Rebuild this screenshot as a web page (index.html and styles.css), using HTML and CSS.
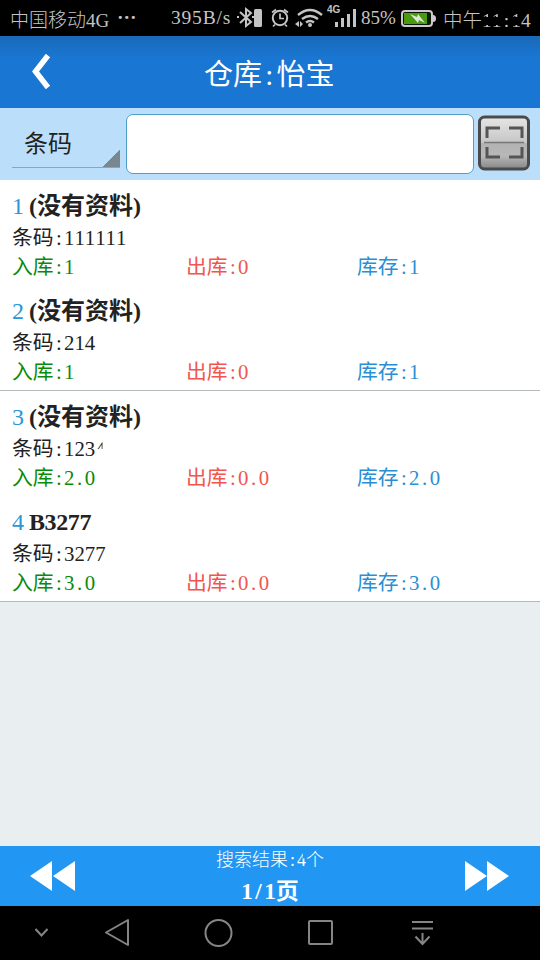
FILE: index.html
```
<!DOCTYPE html>
<html lang="zh-CN">
  <head>
    <meta charset="UTF-8" />
    <meta name="viewport" content="width=device-width, initial-scale=1.0" />
    <link rel="stylesheet" href="styles.css">
    <title>仓库:怡宝</title>
  </head>
  <body>
    <div class="status">
      <span class="carrier">中国移动4G</span>
      <span class="dots">···</span>
      <span class="speed">395B/s</span>
      <svg class="status-icons" width="120" height="36" viewBox="237 0 120 36">
        <g fill="none" stroke="#c4c4c4" stroke-width="2">
          <path d="M240 12l11 10-5 4V9l5 4-11 10M237 17h2M252 17h2" />
          <circle cx="280" cy="18" r="7.200" />
          <path d="M280 13.500v5h4M272 12.500l4-3M288 12.500l-4-3M275 24.500l-2 2M285 24.500l2 2" stroke-width="1.700" />
          <path d="M298 15q12-10 24 0M302 19q8-6 16 0M306 22.500q4-3 8 0" stroke-width="2.400" />
        </g>
        <g fill="#c4c4c4">
          <rect x="254" y="9" width="8" height="18" rx="1.500" />
          <circle cx="310" cy="25" r="2" />
          <path d="M295 24l4-3v6zM300 21l3 3-3 3zM335 22h3v5h-3zM341 18h3v9h-3zM347 14h3v13h-3zM353 9h3v18h-3z" />
          <text x="327" y="13" class="net">4G</text>
        </g>
      </svg>
      <span class="percent">85%</span>
      <svg class="battery" width="36" height="20" viewBox="0 0 36 20">
        <rect x="1" y="3" width="30" height="15" rx="3" fill="#0a1a00" stroke="#d0c8d0" stroke-width="2" />
        <path d="M32 7q3 0 3 3.500t-3 3.500z" fill="#d0c8d0" />
        <rect x="3" y="5" width="23" height="11" fill="#4a9a10" />
        <path d="M9 6l7 3 1-3 7 9-6-3-1 3z" fill="#dde8d4" />
      </svg>
      <span class="clock">中午<span class="worn">11</span><span class="half">:</span><span class="worn">1</span>4</span>
    </div>

    <div class="header">
      <svg class="back" width="20" height="36" viewBox="0 0 20 36">
        <path d="M17 1.500L4.500 17.500l12.500 16" fill="none" stroke="#fff" stroke-width="5.500" />
      </svg>
      <h1>仓库<span class="half">:</span>怡宝</h1>
    </div>

    <div class="search">
      <div class="spinner">条码</div>
      <input class="keyword" type="text" />
      <button class="scan">
        <svg width="52" height="56" viewBox="0 0 52 56">
          <defs>
            <linearGradient id="metal" x1="0" y1="0" x2="0" y2="1">
              <stop offset="0" stop-color="#e6e6e6" />
              <stop offset="0.490" stop-color="#c6c6c6" />
              <stop offset="0.500" stop-color="#b2b2b2" />
              <stop offset="0.750" stop-color="#b8b8b8" />
              <stop offset="1" stop-color="#858585" />
            </linearGradient>
          </defs>
          <rect x="1.500" y="2" width="49" height="52" rx="5" fill="url(#metal)" stroke="#484a4c" stroke-width="3" />
          <path d="M9 23V13h13M31 13h13v10M9 32v10h13M31 42h13V32" fill="none" stroke="#555" stroke-width="3" />
          <path d="M6 27.500h40" stroke="#777" stroke-width="1.500" />
        </svg>
      </button>
    </div>

    <div class="list">
      <div class="item">
        <div class="name"><span class="no">1</span><b>(没有资料)</b></div>
        <div class="code">条码<span class="half">:</span>111111</div>
        <div class="counts">
          <span class="in">入库<span class="half">:</span>1</span>
          <span class="out">出库<span class="half">:</span>0</span>
          <span class="stock">库存<span class="half">:</span>1</span>
        </div>
      </div>
      <div class="item line">
        <div class="name"><span class="no">2</span><b>(没有资料)</b></div>
        <div class="code">条码<span class="half">:</span>214</div>
        <div class="counts">
          <span class="in">入库<span class="half">:</span>1</span>
          <span class="out">出库<span class="half">:</span>0</span>
          <span class="stock">库存<span class="half">:</span>1</span>
        </div>
      </div>
      <div class="item">
        <div class="name"><span class="no">3</span><b>(没有资料)</b></div>
        <div class="code">条码<span class="half">:</span>123<span class="cut">4</span></div>
        <div class="counts">
          <span class="in">入库<span class="half">:</span>2<span class="half">.</span>0</span>
          <span class="out">出库<span class="half">:</span>0<span class="half">.</span>0</span>
          <span class="stock">库存<span class="half">:</span>2<span class="half">.</span>0</span>
        </div>
      </div>
      <div class="item line">
        <div class="name"><span class="no">4</span><b class="latin">B3277</b></div>
        <div class="code">条码<span class="half">:</span>3277</div>
        <div class="counts">
          <span class="in">入库<span class="half">:</span>3<span class="half">.</span>0</span>
          <span class="out">出库<span class="half">:</span>0<span class="half">.</span>0</span>
          <span class="stock">库存<span class="half">:</span>3<span class="half">.</span>0</span>
        </div>
      </div>
    </div>

    <div class="pager">
      <svg width="46" height="32" viewBox="0 0 46 32">
        <path d="M0 16L22 1v30zM23 16L45 1v30z" fill="#fff" />
      </svg>
      <div class="result">
        <div class="total">搜索结果<span class="half">:</span><span class="cut low">4</span>个</div>
        <div class="page">1<span class="half">/</span>1页</div>
      </div>
      <svg width="46" height="32" viewBox="0 0 46 32">
        <path d="M1 1l22 15L1 31zM23 1l22 15-22 15z" fill="#fff" />
      </svg>
    </div>

    <div class="nav">
      <svg width="540" height="54" viewBox="0 906 540 54" fill="none" stroke="#858585" stroke-width="2">
        <path d="M35.500 929l6 6.500 6-6.500" />
        <path d="M106 932.500L128 920v25z" stroke-linejoin="round" />
        <circle cx="218.500" cy="933" r="13" />
        <rect x="309" y="921" width="23" height="23" rx="1" />
        <path d="M412 922h21M412 928.500h21M422.500 933v11M415.500 936.500l7 7.500 7-7.500" />
      </svg>
    </div>
  </body>
</html>
```

FILE: styles.css
```
* {
  box-sizing: border-box;
}

body {
  margin: 0;
  width: 540px;
  height: 960px;
  display: flex;
  flex-direction: column;
  overflow: hidden;
  background-color: #e9eef0;
  color: #222;
  font-family: "Liberation Serif", "Noto Sans CJK SC", serif;
  font-weight: 400;
  font-kerning: none;
  white-space: nowrap;
}

svg {
  display: block;
  flex: none;
}

/* punctuation takes half of a full-width character */
.half {
  display: inline-block;
  width: 0.5em;
  text-align: center;
}

.status {
  height: 36px;
  flex: none;
  display: flex;
  align-items: center;
  padding-left: 10px;
  background-color: #000;
  color: #c4c4c4;
  font-size: 19.5px;
  font-weight: 300;
}

.carrier {
  width: 107px;
  font-size: 19px;
}

.dots {
  width: 54px;
  font-weight: bold;
}

.speed {
  width: 66px;
  letter-spacing: 0.8px;
}

.net {
  font: bold 10px "Liberation Sans", sans-serif;
}

.percent {
  width: 44px;
  padding-left: 4px;
  font-size: 19px;
}

.battery {
  width: 36px;
}

.clock {
  margin-left: 6px;
}

.worn {
  -webkit-mask-image: linear-gradient(#000 35%, transparent 35%, transparent 72%, #000 72%);
  mask-image: linear-gradient(#000 35%, transparent 35%, transparent 72%, #000 72%);
}

.header {
  height: 72px;
  flex: none;
  display: flex;
  align-items: center;
  padding-left: 31px;
  background: linear-gradient(#1a69b8, #1976d2 30%);
  color: #fff;
}

.header h1 {
  margin: 0 0 0 153px;
  font-size: 29px;
  font-weight: 400;
  line-height: 40px;
  padding-top: 5px;
}

.search {
  height: 72px;
  flex: none;
  display: flex;
  align-items: flex-start;
  padding: 6px 10px 0 12px;
  background-color: #bbdefb;
}

.spinner {
  width: 108px;
  height: 44px;
  margin: 10px 6px 0 0;
  padding-left: 12px;
  border-bottom: 1px solid #8fa5b5;
  background: linear-gradient(135deg, transparent 50%, #788890 50%) right bottom / 18px 18px no-repeat;
  font-size: 24px;
  line-height: 40px;
}

.keyword {
  width: 348px;
  height: 60px;
  border: 1px solid #4fa0c8;
  border-radius: 7px;
  background-color: #fff;
}

.scan {
  margin: 1px 0 0 4px;
  padding: 0;
  border: none;
  background: none;
}

.list {
  flex: 1;
}

.item {
  height: 105px;
  padding: 10px 12px 0;
  background-color: #fff;
  font-size: 20.8px;
}

.item.line {
  height: 106px;
  border-bottom: 1px solid #b4bab8;
}

.name {
  height: 33px;
  font-size: 24px;
  line-height: 32px;
}

.name b {
  font-weight: 700;
}

.no {
  display: inline-block;
  width: 17px;
  color: #2b96d8;
}

.name .latin {
  letter-spacing: -0.4px;
}

.code {
  height: 30px;
  line-height: 30px;
}

.counts {
  display: flex;
  line-height: 28px;
}

.in {
  width: 174px;
  color: #098a09;
}

.out {
  width: 171px;
  color: #f0564e;
}

.stock {
  color: #2b8fd4;
}

.cut {
  display: inline-block;
  clip-path: polygon(0 0, 70% 0, 70% 50%, 0 50%);
}

.cut.low {
  clip-path: polygon(0 0, 65% 0, 65% 45%, 100% 45%, 100% 100%, 0 100%);
}

.pager {
  height: 60px;
  flex: none;
  display: flex;
  align-items: center;
  justify-content: space-between;
  padding: 0 30px;
  background-color: #2196f3;
  color: #fff;
}

.result {
  text-align: center;
}

.total {
  font-size: 18px;
  font-weight: 300;
  line-height: 28px;
}

.page {
  height: 32px;
  font-size: 23px;
  font-weight: bold;
  line-height: 35px;
}

.nav {
  height: 54px;
  flex: none;
  background-color: #000;
}
```
